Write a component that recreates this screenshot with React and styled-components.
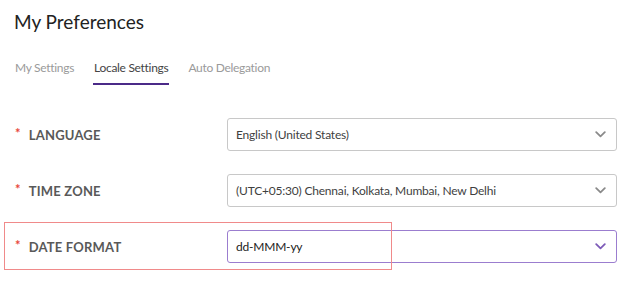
import React from "react";
import styled, { createGlobalStyle } from "styled-components";

const GlobalStyle = createGlobalStyle`
  html, body {
    margin: 0;
    padding: 0;
    background: #fff;
  }
  body {
    font-family: Lato, "Open Sans", sans-serif;
    color: #333;
  }
`;

const tabs = ["My Settings", "Locale Settings", "Auto Delegation"];

const fields = [
  { label: "LANGUAGE", value: "English (United States)" },
  { label: "TIME ZONE", value: "(UTC+05:30) Chennai, Kolkata, Mumbai, New Delhi" },
  { label: "DATE FORMAT", value: "dd-MMM-yy", active: true, marked: true },
];

function Chevron({ active }) {
  return (
    <svg width="11" height="7" viewBox="0 0 11 7">
      <path
        d="M1.2 1.2 L5.5 5.3 L9.8 1.2"
        fill="none"
        stroke={active ? "#7d5bb8" : "#8a8a8a"}
        strokeWidth="1.8"
        strokeLinecap="round"
        strokeLinejoin="round"
      />
    </svg>
  );
}

function App() {
  return (
    <Page>
      <GlobalStyle />
      <Title>My Preferences</Title>
      <Tabs>
        {tabs.map((t) => (
          <Tab key={t} selected={t === "Locale Settings"}>
            {t}
          </Tab>
        ))}
      </Tabs>
      <Form>
        {fields.map((f) => (
          <Row key={f.label}>
            {f.marked && <Mark />}
            <Label>
              <Star>*</Star>
              {f.label}
            </Label>
            <Select active={f.active}>
              <span>{f.value}</span>
              <Chevron active={f.active} />
            </Select>
          </Row>
        ))}
      </Form>
    </Page>
  );
}

export default App;

const Page = styled.div`
  width: 624px;
  height: 284px;
  padding: 10px 8px 0 14px;
  box-sizing: border-box;
`;

const Title = styled.h1`
  margin: 0;
  font-size: 19px;
  font-weight: 400;
  color: #222;
  line-height: 24px;
`;

const Tabs = styled.div`
  display: flex;
  gap: 18px;
  margin-top: 26px;
  padding-left: 0;
`;

const Tab = styled.div`
  font-size: 12px;
  letter-spacing: -0.3px;
  line-height: 16px;
  padding: 0 1px 7px;
  color: ${(p) => (p.selected ? "#444" : "#9a9a9a")};
  border-bottom: 2px solid ${(p) => (p.selected ? "#4b2a88" : "transparent")};
`;

const Form = styled.div`
  display: flex;
  flex-direction: column;
  gap: 23px;
  margin-top: 33px;
`;

const Row = styled.div`
  position: relative;
  display: grid;
  grid-template-columns: 213px 390px;
  align-items: center;
`;

const Mark = styled.div`
  position: absolute;
  left: -10px;
  top: -8px;
  width: 388px;
  height: 48px;
  border: 1px solid #f08a8a;
  box-sizing: border-box;
  pointer-events: none;
`;

const Label = styled.div`
  display: flex;
  align-items: center;
  font-size: 13px;
  font-weight: 700;
  color: #595959;
  letter-spacing: 0.2px;
  padding-left: 1px;
`;

const Star = styled.span`
  color: #e8473a;
  font-weight: 700;
  margin-right: 8px;
  position: relative;
  top: -2px;
`;

const Select = styled.div`
  height: 33px;
  box-sizing: border-box;
  display: flex;
  align-items: center;
  justify-content: space-between;
  padding: 0 10px 0 8px;
  border: 1px solid ${(p) => (p.active ? "#9b7dcf" : "#c8c8c8")};
  border-radius: 3px;
  font-size: 12px;
  letter-spacing: -0.2px;
  color: ${(p) => (p.active ? "#222" : "#3f3f3f")};
`;
